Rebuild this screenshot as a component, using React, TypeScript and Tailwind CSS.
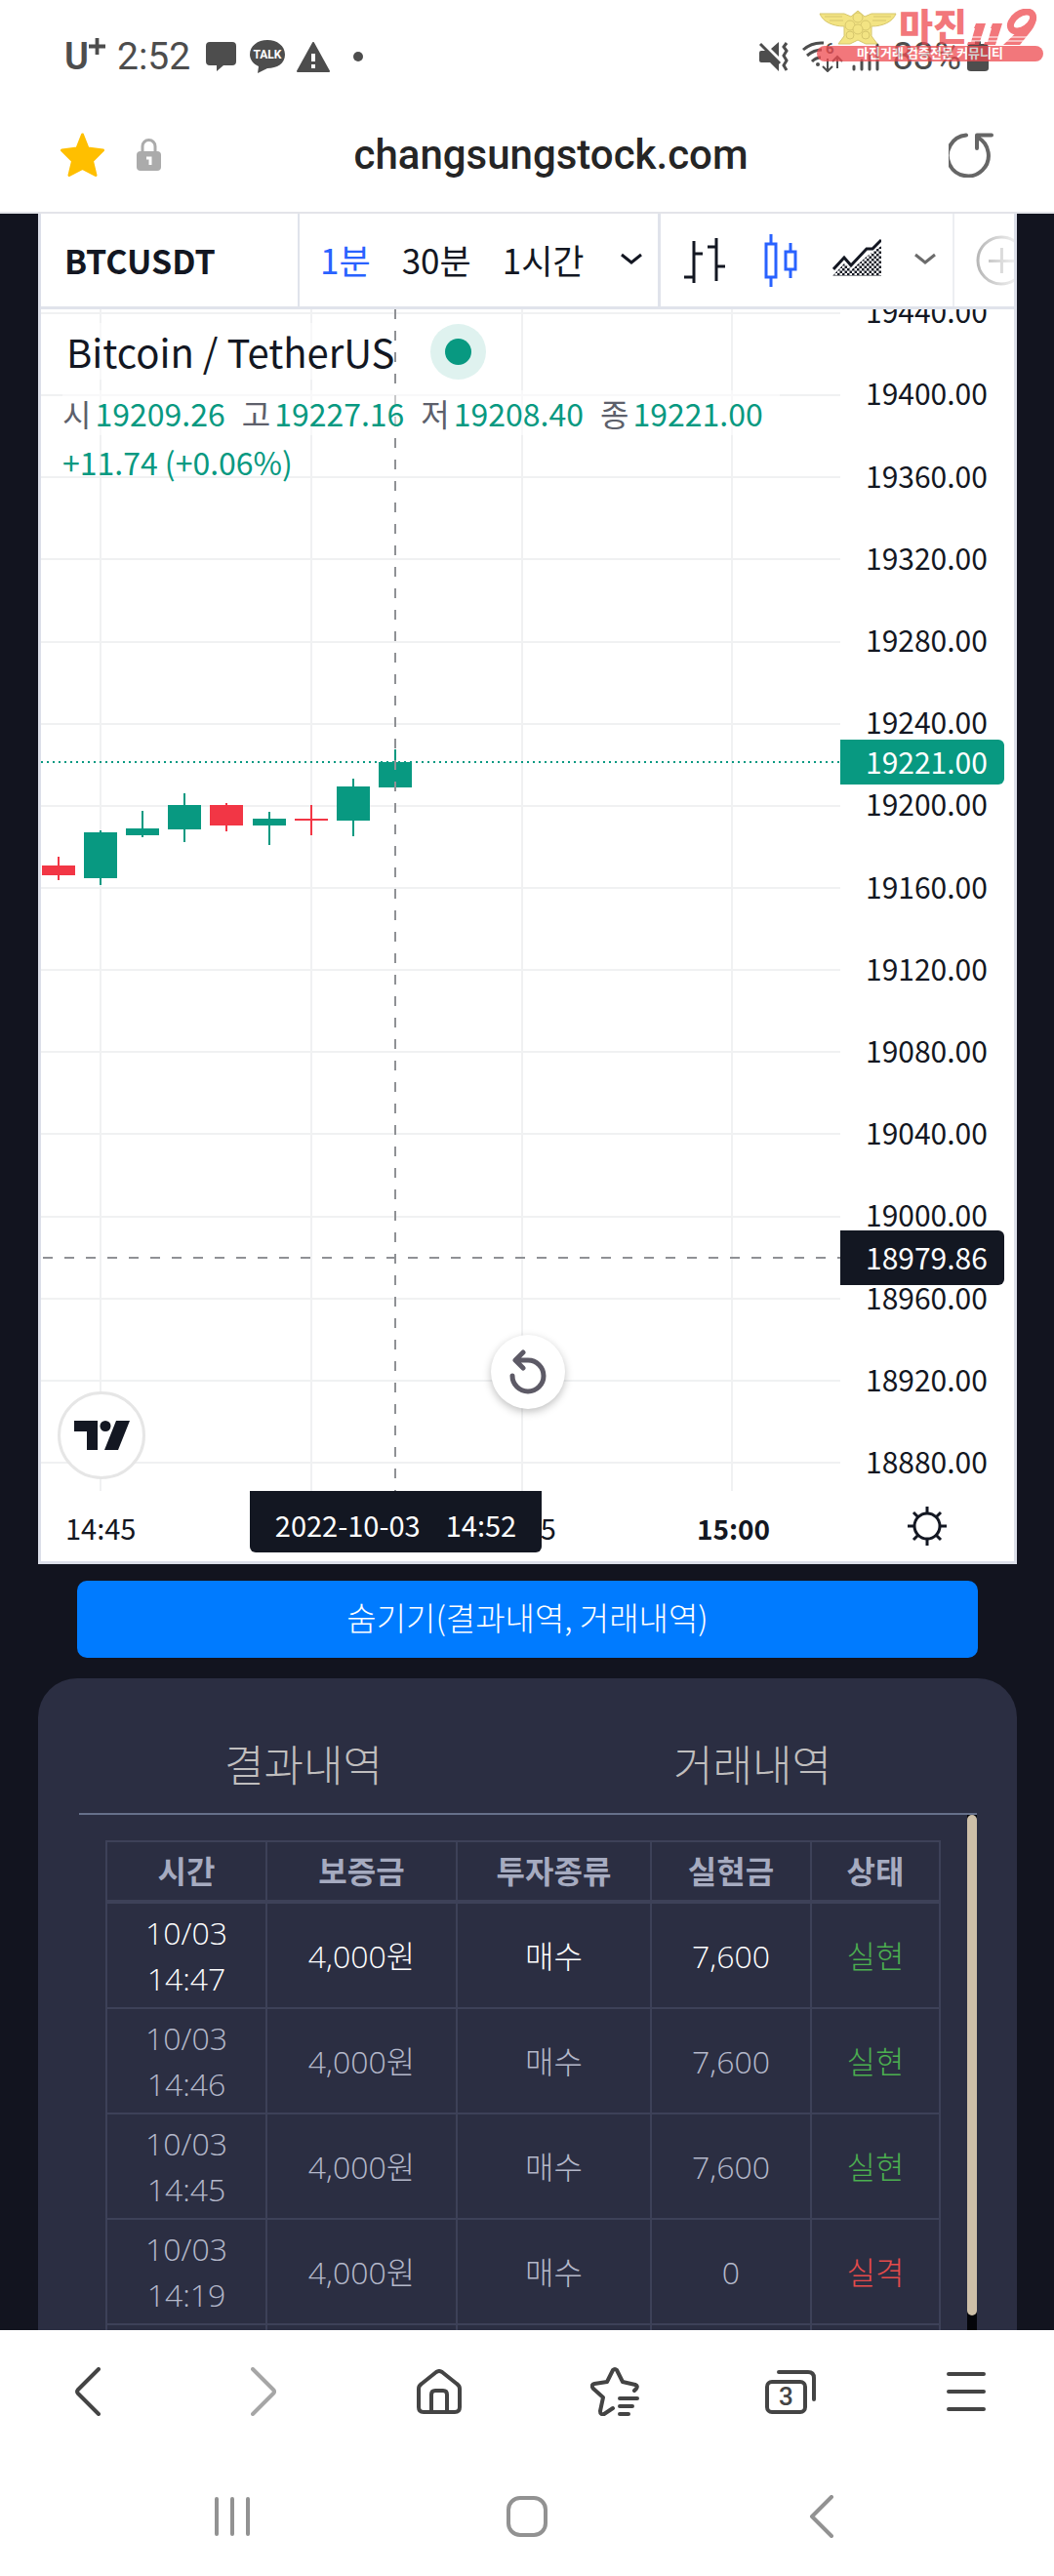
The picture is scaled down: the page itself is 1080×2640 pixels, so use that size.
import React from 'react';

const PRICES = [
  '19440.00', '19400.00', '19360.00', '19320.00', '19280.00', '19240.00', '19200.00', '19160.00',
  '19120.00', '19080.00', '19040.00', '19000.00', '18960.00', '18920.00', '18880.00',
];

type Candle = { x: number; top: number; bottom: number; high: number; low: number; up: boolean };

const CANDLES: Candle[] = [
  { x: 18, top: 570, bottom: 580, high: 561, low: 585, up: false },
  { x: 61, top: 536, bottom: 583, high: 534, low: 590, up: true },
  { x: 104, top: 532, bottom: 539, high: 514, low: 541, up: true },
  { x: 147, top: 508, bottom: 533, high: 496, low: 546, up: true },
  { x: 190, top: 508, bottom: 529, high: 506, low: 535, up: false },
  { x: 234, top: 522, bottom: 529, high: 515, low: 549, up: true },
  { x: 277, top: 522, bottom: 524, high: 508, low: 539, up: false },
  { x: 320, top: 489, bottom: 524, high: 481, low: 540, up: true },
  { x: 363, top: 464, bottom: 490, high: 451, low: 493, up: true },
];

const OHLC = [
  ['시', '19209.26'],
  ['고', '19227.16'],
  ['저', '19208.40'],
  ['종', '19221.00'],
];

const ROWS = [
  { date: '10/03', time: '14:47', deposit: '4,000원', kind: '매수', profit: '7,600', status: '실현', win: true },
  { date: '10/03', time: '14:46', deposit: '4,000원', kind: '매수', profit: '7,600', status: '실현', win: true },
  { date: '10/03', time: '14:45', deposit: '4,000원', kind: '매수', profit: '7,600', status: '실현', win: true },
  { date: '10/03', time: '14:19', deposit: '4,000원', kind: '매수', profit: '0', status: '실격', win: false },
];

function Watermark() {
  return (
    <div className="absolute top-[9px] right-[11px] w-[232px] text-[#ee4a50] opacity-75">
      <div className="flex h-[38px] items-end">
        <svg width="84" height="38" viewBox="0 0 84 38" fill="#f0dc5a" stroke="#c9b43c" strokeWidth="1">
          <path d="M3 5h25l7 3 7-6 7 6 7-3h25c-3 8-13 13-25 13v10l6 8h-12l-8-4-8 4H22l6-8V18C16 18 6 13 3 5Z" />
          <circle cx="42" cy="9" r="5" />
          <circle cx="34" cy="17" r="5" />
          <circle cx="50" cy="17" r="5" />
          <circle cx="42" cy="21" r="5" />
          <circle cx="34" cy="27" r="4" />
          <circle cx="50" cy="27" r="4" />
          <path d="M8 8h18M13 12h14M58 8h18M57 12h14" fill="none" />
        </svg>
        <span className="text-[38px] leading-[38px] font-black">마진</span>
        <svg width="74" height="38" viewBox="0 0 74 38" fill="currentColor">
          <path d="M9 15h10l-7 22H0l1-3h3l4-14H7ZM26 15h10l-7 22H17l1-3h3l4-14h-1Z" />
          <ellipse cx="56" cy="13" rx="13" ry="8" transform="rotate(-35 56 13)" fill="none" stroke="currentColor" strokeWidth="7" />
          <path d="M71 9q0 6-5 13L54 37H37l18-17Z" />
          <path d="M0 29h62M0 33h59" stroke="white" strokeWidth="1" />
        </svg>
      </div>
      <div className="flex h-4 items-center justify-center rounded-full bg-[#ee4a50] text-[13px] leading-4 font-bold whitespace-nowrap text-white">
        마진거래 검증전문 커뮤니티
      </div>
    </div>
  );
}

function StatusBar() {
  return (
    <div className="relative flex h-[116px] items-center justify-between pr-[67px] pl-[66px] text-[#4d4d4d]">
      <div className="flex items-center">
        <span className="flex items-start text-[38px] leading-[38px] font-semibold">
          U
          <svg width="17" height="17" viewBox="0 0 18 18" stroke="currentColor" strokeWidth="4">
            <path d="M9 0v18M0 9h18" />
          </svg>
        </span>
        <span className="ml-3 text-[39px] leading-[40px]">2:52</span>
        <svg className="ml-4" width="31" height="32" viewBox="0 0 31 32" fill="currentColor">
          <path d="M4 1h23q4 0 4 4v16q0 4-4 4h-9l-7 6v-6H4q-4 0-4-4V5q0-4 4-4Z" />
        </svg>
        <svg className="ml-3.5" width="36" height="34" viewBox="0 0 36 34">
          <path d="M18 0c10 0 18 6 18 15s-8 14-18 14l-10 5 1-7C4 25 0 20 0 15 0 6 8 0 18 0Z" fill="currentColor" />
          <text x="18" y="19" fontSize="12" fontWeight="700" fill="white" textAnchor="middle">TALK</text>
        </svg>
        <svg className="ml-3" width="34" height="31" viewBox="0 0 34 31">
          <path d="M17 1 33 30H1Z" fill="currentColor" stroke="currentColor" strokeWidth="2" strokeLinejoin="round" />
          <path d="M17 12v8M17 23v4" stroke="white" strokeWidth="4" />
        </svg>
        <span className="ml-6 size-2.5 rounded-full bg-[#4d4d4d]" />
      </div>
      <div className="flex items-center">
        <svg width="31" height="30" viewBox="0 0 31 30" fill="currentColor">
          <path d="M1 11q0-2 2-2h6l12 12v9l-9-9H3q-2 0-2-2ZM13 7l8-7v15Z" />
          <path d="M2 2l20 20" stroke="currentColor" strokeWidth="3" />
          <path d="m29 1-3 4 3 4-3 5 3 5-3 5 3 5" fill="none" stroke="currentColor" strokeWidth="3" />
        </svg>
        <svg className="ml-3.5" width="42" height="32" viewBox="0 0 42 32" fill="none" stroke="currentColor" strokeWidth="3">
          <path d="M1 9Q10 1 22 2M5 15q7-6 15-6M10 21q4-4 9-4" />
          <circle cx="16" cy="24" r="2" fill="currentColor" stroke="none" />
          <path d="M26 18v12m-5-4 5 5 5-5M36 28V17m-5 4 5-5 5 5" strokeWidth="2" />
          <text x="24" y="13" fontSize="15" fontWeight="700" fill="currentColor" stroke="none">6</text>
        </svg>
        <svg className="ml-2" width="30" height="30" viewBox="0 0 30 30" stroke="currentColor" strokeWidth="3" strokeLinecap="round">
          <path d="M3 25v3M11 19v9M19 12v16M27 3v25" />
        </svg>
        <span className="ml-3 text-[38px] leading-[40px]">83%</span>
        <svg className="ml-1.5" width="22" height="32" viewBox="0 0 22 32" fill="currentColor">
          <path d="M8 0h6v3h4q4 0 4 4v21q0 3-4 3H4q-4 0-4-3V7q0-4 4-4h4Z" />
        </svg>
      </div>
      <Watermark />
    </div>
  );
}

function AddressBar() {
  return (
    <div className="box-content flex h-[101px] items-center gap-[33px] border-b-2 border-[#e3e4e9] px-[62px]">
      <button aria-label="즐겨찾기" className="mb-4">
        <svg width="45" height="45" viewBox="0 0 45 45" fill="#ffbf00" stroke="#ffbf00" strokeWidth="3" strokeLinejoin="round">
          <path d="m22.500 2 5.500 14 15.500 2-11 11 3.500 14.500-13.500-7-13.500 7L12.500 29 1.500 18 17 16Z" />
        </svg>
      </button>
      <button aria-label="사이트 정보" className="mb-4">
        <svg width="25" height="33" viewBox="0 0 25 33">
          <path d="M6 14V8a6.500 6.500 0 0 1 13 0v6" fill="none" stroke="#ababab" strokeWidth="3" />
          <rect y="13" width="25" height="20" rx="4" fill="#ababab" />
          <path d="M10 20h4v7" fill="none" stroke="white" strokeWidth="3" />
        </svg>
      </button>
      <input
        aria-label="주소"
        readOnly
        defaultValue="changsungstock.com"
        className="mb-4 min-w-0 flex-1 bg-transparent text-center text-[42px] leading-[52px] font-medium text-[#252525] outline-none"
      />
      <button aria-label="새로고침" className="mb-4 ml-2">
        <svg width="46" height="46" viewBox="0 0 46 46" fill="none" stroke="#666" strokeWidth="4" strokeLinecap="round" strokeLinejoin="round">
          <path d="M18 2.500A21 21 0 1 0 29 4.500M29 16V2.500h15" />
        </svg>
      </button>
    </div>
  );
}

function Chevron({ muted = false }: { muted?: boolean }) {
  return (
    <svg width="22" height="12" viewBox="0 0 22 12" fill="none" stroke={muted ? '#6b6b6b' : '#131722'} strokeWidth="3">
      <path d="m1 2 10 8 10-8" />
    </svg>
  );
}

function ChartToolbar() {
  return (
    <div className="flex h-[98px] items-stretch border-b-3 border-[#e0e3eb] text-[35px]">
      <button className="w-[263px] shrink-0 pl-6 text-left text-[34px] font-bold">BTCUSDT</button>
      <div className="flex flex-1 items-center border-l-2 border-[#e0e3eb] pr-4 pl-[17px]">
        <button className="px-1 text-[#2962ff]">1분</button>
        <button className="ml-6 px-1">30분</button>
        <button className="ml-6 px-1">1시간</button>
        <button aria-label="시간 간격" className="mb-1 ml-auto"><Chevron /></button>
      </div>
      <div className="flex w-[302px] items-center border-l-3 border-[#e0e3eb] pl-6">
        <button aria-label="바">
          <svg width="42" height="46" viewBox="0 0 42 46" fill="none" stroke="#131722" strokeWidth="3">
            <path d="M10 3v43M10 16h9M0 40h10M33 0v44M24 9h9M33 29h9" />
          </svg>
        </button>
        <button aria-label="캔들" className="ml-10">
          <svg width="34" height="54" viewBox="0 0 34 54" fill="none" stroke="#2962ff" strokeWidth="3">
            <path d="M2 10h10v34H2ZM7 0v10M7 44v10M22 18h10v18H22ZM27 9v9M27 36v9" />
          </svg>
        </button>
        <button aria-label="영역" className="mb-1 ml-9">
          <svg width="50" height="39" viewBox="0 0 50 39">
            <defs>
              <pattern id="dots" width="5" height="5" patternUnits="userSpaceOnUse">
                <path d="M0 0h2.500v2.500H0ZM2.500 2.500H5V5H2.500Z" fill="#131722" />
              </pattern>
            </defs>
            <path d="m0 38 12-13 8 6 16-14 14-10v31Z" fill="url(#dots)" />
            <path d="m1 31 11-12 7 8 16-17h6l9-9" fill="none" stroke="#131722" strokeWidth="3" />
          </svg>
        </button>
        <button aria-label="차트 종류" className="mb-1 ml-[34px]"><Chevron muted /></button>
      </div>
      <div className="flex w-[63px] items-center overflow-hidden border-l-2 border-[#eceef2] pl-[22px]">
        <button aria-label="비교" className="shrink-0">
          <svg width="52" height="52" viewBox="0 0 52 52" fill="none">
            <defs>
              <linearGradient id="fade" x1="0" x2="40" y1="0" y2="0" gradientUnits="userSpaceOnUse">
                <stop stopColor="#b5b5b5" />
                <stop offset="1" stopColor="#f0f0f0" />
              </linearGradient>
            </defs>
            <circle cx="26" cy="26" r="24" stroke="url(#fade)" strokeWidth="3" />
            <path d="M14 26h24v1H14ZM26 14h1v24h-1Z" stroke="url(#fade)" strokeWidth="2" />
          </svg>
        </button>
      </div>
    </div>
  );
}

function CandlePlot() {
  return (
    <svg className="block h-full w-full" fill="none" aria-label="BTCUSDT 캔들 차트">
      <g stroke="#f0f1f2" strokeWidth="2">
        {PRICES.map((p, i) => (
          <line key={p} x1="0" x2="100%" y1={4 + Math.round((i * 1178) / 14)} y2={4 + Math.round((i * 1178) / 14)} />
        ))}
        {[61, 277, 493, 708].map((x) => (
          <line key={x} x1={x} x2={x} y1="0" y2="100%" />
        ))}
      </g>
      <line x1="0" x2="100%" y1="464" y2="464" stroke="#089981" strokeWidth="2" strokeDasharray="2 4" />
      {CANDLES.map((c) => (
        <g key={c.x} fill={c.up ? '#089981' : '#f23645'}>
          <rect x={c.x - 1} y={c.high} width="2" height={c.low - c.high} />
          <rect x={c.x - 17} y={c.top} width="34" height={c.bottom - c.top} />
        </g>
      ))}
      <g stroke="#8f9195" strokeWidth="2" strokeDasharray="10 12">
        <line x1="363" x2="363" y1="0" y2="100%" />
        <line x1="2" x2="100%" y1="972" y2="972" />
      </g>
    </svg>
  );
}

function Legend() {
  return (
    <div className="absolute top-3.5 left-[22px]">
      <div className="flex items-center">
        <span className="bg-white/50 pl-1 text-[40px] leading-[58px]">Bitcoin / TetherUS</span>
        <span className="ml-[37px] flex size-[57px] items-center justify-center rounded-full bg-[#dff2ef]">
          <span className="size-[27px] rounded-full bg-[#089981]" />
        </span>
      </div>
      <dl className="mt-[11px] flex bg-white/50 text-[32px] leading-[46px] text-[#089981]">
        {OHLC.map(([label, value]) => (
          <div key={label} className="flex pr-[17px]">
            <dt className="pr-1 text-[#5d606b]">{label}</dt>
            <dd>{value}</dd>
          </div>
        ))}
      </dl>
      <p className="mt-1 text-[32px] leading-[46px] text-[#089981]">+11.74 (+0.06%)</p>
    </div>
  );
}

function Chart() {
  return (
    <section className="border-x-3 border-b-3 border-[#dcdfe9] bg-white text-[#131722]">
      <ChartToolbar />
      <div className="flex h-[1211px]">
        <div className="relative flex-1">
          <CandlePlot />
          <Legend />
          <a
            href="#tradingview"
            aria-label="TradingView"
            className="absolute bottom-3 left-[17px] flex size-[90px] items-center justify-center rounded-full border-3 border-[#e6e6e6] bg-white"
          >
            <svg width="57" height="30" viewBox="0 0 57 30" fill="#131722">
              <path d="M0 0h24v30H13V11H0ZM43 0h14L45 30H31Z" />
              <circle cx="32" cy="5.500" r="5.500" />
            </svg>
          </a>
          <button
            aria-label="차트 재설정"
            className="absolute bottom-[84px] left-[461px] flex size-[76px] items-center justify-center rounded-full bg-white shadow-[0_3px_8px_rgba(0,0,0,0.25)]"
          >
            <svg width="38" height="46" viewBox="0 0 38 46" fill="none" stroke="#5d5a66" strokeWidth="5" strokeLinecap="round" strokeLinejoin="round">
              <path d="M3 27a16 16 0 1 0 16-16H7M14 3 6 11l8 8" />
            </svg>
          </button>
        </div>
        <div className="relative w-[178px] overflow-hidden text-[30px]">
          <div className="mt-[-41px] flex h-[1263px] flex-col">
            {PRICES.map((p) => (
              <span key={p} className="flex flex-1 items-center pl-[26px] leading-none">{p}</span>
            ))}
          </div>
          <span className="absolute top-[441px] left-0 flex h-[46px] w-[168px] items-center rounded-r-md bg-[#089981] pb-0.5 pl-[26px] leading-none text-white">
            19221.00
          </span>
          <span className="absolute top-[944px] left-0 flex h-[56px] w-[168px] items-center rounded-r-md bg-[#131722] pb-0.5 pl-[26px] leading-none text-white">
            18979.86
          </span>
        </div>
      </div>
      <div className="relative flex h-[72px] items-center pt-1 text-[29px]">
        <span className="ml-[25px]">14:45</span>
        <span className="ml-[358px]">14:55</span>
        <span className="ml-[144px] text-[28px] font-bold">15:00</span>
        <button aria-label="설정" className="mr-[69px] mb-1 ml-auto">
          <svg width="40" height="40" viewBox="0 0 40 40" fill="none" stroke="#131722" strokeWidth="3">
            <circle cx="20" cy="20" r="13" />
            <path d="M20 0v7M20 33v7M0 20h7M33 20h7M6 6l5 5M29 29l5 5M34 6l-5 5M11 29l-5 5" />
          </svg>
        </button>
        <div className="absolute top-0 left-[214px] flex h-[63px] w-[299px] items-center justify-center gap-[26px] rounded-b-md bg-[#131722] pt-1.5 whitespace-nowrap text-white">
          <span>2022-10-03</span>
          <span>14:52</span>
        </div>
      </div>
    </section>
  );
}

const CELL = 'border-2 border-[#3d4158] py-1.5 text-center';

function History() {
  return (
    <section className="mt-[21px] flex min-h-0 flex-1 flex-col rounded-t-[40px] bg-[#2b2e42] pr-[41px] pl-[42px] font-light">
      <div className="grid grid-cols-2 border-b-2 border-[#66708a] pt-[57px] pb-[21px] text-[44px] leading-[60px] text-[#c0bebe]">
        <button>결과내역</button>
        <button>거래내역</button>
      </div>
      <div className="flex min-h-0 flex-1 overflow-hidden">
        <div className="flex-1 px-[27px] pt-[26px]">
          <table className="w-full table-fixed border-collapse font-['Open_Sans','Noto_Sans_CJK_KR',sans-serif] text-[32px] leading-[47px] text-[#b4b8ca]">
            <thead>
              <tr className="font-bold text-[#a6abc0]">
                <th className={`${CELL} w-[164px] border-b-4`}>시간</th>
                <th className={`${CELL} w-[195px] border-b-4`}>보증금</th>
                <th className={`${CELL} w-[199px] border-b-4`}>투자종류</th>
                <th className={`${CELL} w-[164px] border-b-4`}>실현금</th>
                <th className={`${CELL} border-b-4`}>상태</th>
              </tr>
            </thead>
            <tbody>
              {ROWS.map((r, i) => (
                <tr key={r.time} className={i === 0 ? 'text-white' : ''}>
                  <td className={CELL}>{r.date}<br />{r.time}</td>
                  <td className={CELL}>{r.deposit}</td>
                  <td className={CELL}>{r.kind}</td>
                  <td className={CELL}>{r.profit}</td>
                  <td className={r.win ? `${CELL} text-[#4caf50]` : `${CELL} text-[#e54b4b]`}>{r.status}</td>
                </tr>
              ))}
              <tr className="h-[108px]">
                <td className={CELL} />
                <td className={CELL} />
                <td className={CELL} />
                <td className={CELL} />
                <td className={CELL} />
              </tr>
            </tbody>
          </table>
        </div>
        <div className="w-[10px] bg-[#04050a] pb-[15px]">
          <div className="h-full rounded-full bg-[#cdbfa8]" />
        </div>
      </div>
    </section>
  );
}

function BrowserBar() {
  return (
    <nav className="grid h-[126px] grid-cols-6 place-items-center text-[#444]">
      <button aria-label="뒤로">
        <svg width="26" height="50" viewBox="0 0 26 50" fill="none" stroke="currentColor" strokeWidth="4" strokeLinecap="round" strokeLinejoin="round">
          <path d="M24 2 3 23q-2 2 0 4l21 21" />
        </svg>
      </button>
      <button aria-label="앞으로" className="text-[#a6a6a6]">
        <svg width="26" height="50" viewBox="0 0 26 50" fill="none" stroke="currentColor" strokeWidth="4" strokeLinecap="round" strokeLinejoin="round">
          <path d="m2 2 21 21q2 2 0 4L2 48" />
        </svg>
      </button>
      <button aria-label="홈">
        <svg width="46" height="46" viewBox="0 0 46 46" fill="none" stroke="currentColor" strokeWidth="4" strokeLinejoin="round">
          <path d="M20 3q3-2 6 0l15 12q3 2 3 5v19q0 5-5 5H7q-5 0-5-5V20q0-3 3-5ZM15 44V26q0-4 4-4h8q4 0 4 4v18" />
        </svg>
      </button>
      <button aria-label="북마크">
        <svg width="50" height="50" viewBox="0 0 50 50" fill="none" stroke="currentColor" strokeWidth="4" strokeLinecap="round" strokeLinejoin="round">
          <path d="m23 42-9 6q-4 1-4-3l3-14L3 22q-3-4 1-5l13-2 6-12q2-2 4 0l6 12 13 3q3 1 1 4l-2 2M30 32h18M30 40h13M30 48h9" />
        </svg>
      </button>
      <button aria-label="탭 3개">
        <svg width="52" height="46" viewBox="0 0 52 46" fill="none" stroke="currentColor" strokeWidth="4" strokeLinecap="round">
          <rect x="2" y="13" width="39" height="31" rx="5" />
          <path d="M14 3h30q6 0 6 6v22" />
          <text x="21.500" y="37" fontSize="26" fontWeight="500" fill="currentColor" stroke="none" textAnchor="middle">3</text>
        </svg>
      </button>
      <button aria-label="메뉴">
        <svg width="42" height="40" viewBox="0 0 42 40" stroke="currentColor" strokeWidth="4" strokeLinecap="round">
          <path d="M3 2h36M3 20h36M3 38h36" />
        </svg>
      </button>
    </nav>
  );
}

function SystemBar() {
  return (
    <nav className="grid h-[126px] grid-cols-3 place-items-center px-[87px] pt-1 text-[#929292]">
      <button aria-label="최근 앱">
        <svg width="38" height="42" viewBox="0 0 38 42" stroke="currentColor" strokeWidth="4" strokeLinecap="round">
          <path d="M3 3v36M19 3v36M35 3v36" />
        </svg>
      </button>
      <button aria-label="홈 화면">
        <svg width="42" height="42" viewBox="0 0 42 42" fill="none" stroke="currentColor" strokeWidth="4">
          <rect x="2" y="2" width="38" height="38" rx="12" />
        </svg>
      </button>
      <button aria-label="이전">
        <svg width="26" height="44" viewBox="0 0 26 44" fill="none" stroke="currentColor" strokeWidth="4" strokeLinecap="round" strokeLinejoin="round">
          <path d="M23 2 3 22l20 20" />
        </svg>
      </button>
    </nav>
  );
}

export default function App() {
  return (
    <div className="flex h-screen flex-col bg-white font-['Roboto','Noto_Sans_CJK_KR',sans-serif]">
      <header className="shrink-0">
        <StatusBar />
        <AddressBar />
      </header>
      <main className="flex min-h-0 flex-1 flex-col overflow-hidden bg-[#12141f] pr-[38px] pl-[39px] font-['Noto_Sans_CJK_KR',sans-serif]">
        <Chart />
        <button className="mx-10 mt-[17px] h-[79px] shrink-0 rounded-[10px] bg-[#007bff] pb-1 text-[33px] font-light text-white">
          숨기기(결과내역, 거래내역)
        </button>
        <History />
      </main>
      <footer className="shrink-0">
        <BrowserBar />
        <SystemBar />
      </footer>
    </div>
  );
}
